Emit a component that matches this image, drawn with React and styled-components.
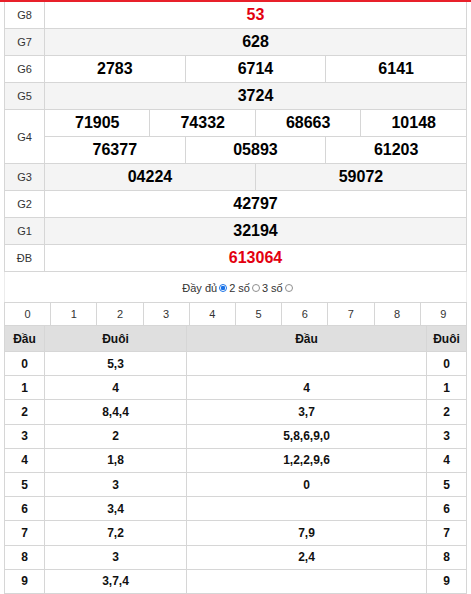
import React from 'react';
import styled, { createGlobalStyle } from 'styled-components';

const GlobalStyle = createGlobalStyle`
    html, body { margin: 0; padding: 0; background: #fff; }
    body { font-family: "Liberation Sans", Arial, sans-serif; color: #000; }
`;

const Page = styled.div`
    width: 471px;
    box-sizing: border-box;
    border-top: 2px solid #e8202a;
    padding: 0 4px;
`;

const Table = styled.table`
    width: 100%;
    border-collapse: collapse;
    table-layout: fixed;
`;

const ResultTable = styled(Table)`
    tr:first-child td { border-top: 0; }
`;

const Row = styled.tr`
    background: ${p => (p.$alt ? '#f4f4f4' : '#fff')};
`;

const LabelCol = styled.col`
    width: 40px;
`;

const Label = styled.td`
    height: 26px;
    padding: 0;
    border: 1px solid #d6d6d6;
    text-align: center;
    font-size: 11px;
    color: #333;
`;

const Prize = styled.td`
    height: 26px;
    padding: 0;
    border: 1px solid #d6d6d6;
    text-align: center;
    font-size: 16px;
    font-weight: bold;
    color: ${p => (p.$red ? '#e3000f' : '#000')};
`;

const RadioRow = styled.div`
    height: 30px;
    display: flex;
    align-items: center;
    justify-content: center;
    font-size: 11px;
    color: #333;
    border-left: 1px solid #ececec;
    border-right: 1px solid #ececec;
    padding: 1px 0 0 6px;
    box-sizing: border-box;
`;

const Radio = styled.span`
    width: 8px;
    height: 8px;
    border-radius: 50%;
    box-sizing: border-box;
    border: 1px solid ${p => (p.$on ? '#1a73e8' : '#8f8f8f')};
    background: ${p => (p.$on ? 'radial-gradient(circle, #1a73e8 0 2px, #fff 2.5px)' : '#fff')};
    margin: 0 2px;
`;

const DigitCell = styled.td`
    height: 22px;
    padding: 0;
    border: 1px solid #d6d6d6;
    text-align: center;
    font-size: 11px;
    color: #333;
`;

const HeadCell = styled.th`
    height: 25px;
    padding: 0;
    border: 1px solid #d6d6d6;
    border-top: 0;
    background: #dfdfdf;
    font-size: 12px;
    font-weight: bold;
    color: #111;
`;

const LotoCell = styled.td`
    height: 23.2px;
    padding: 0;
    border: 1px solid #d6d6d6;
    text-align: center;
    font-size: 12px;
    font-weight: bold;
    color: #111;
`;

const NarrowCol = styled.col`
    width: 40px;
`;
const TailCol = styled.col`
    width: 142px;
`;

const prizes = [
    { label: 'G8', nums: ['53'], red: true },
    { label: 'G7', nums: ['628'] },
    { label: 'G6', nums: ['2783', '6714', '6141'] },
    { label: 'G5', nums: ['3724'] },
];
const after = [
    { label: 'G3', nums: ['04224', '59072'] },
    { label: 'G2', nums: ['42797'] },
    { label: 'G1', nums: ['32194'] },
    { label: 'ĐB', nums: ['613064'], red: true },
];

const loto = [
    ['5,3', ''],
    ['4', '4'],
    ['8,4,4', '3,7'],
    ['2', '5,8,6,9,0'],
    ['1,8', '1,2,2,9,6'],
    ['3', '0'],
    ['3,4', ''],
    ['7,2', '7,9'],
    ['3', '2,4'],
    ['3,7,4', ''],
];

function PrizeRow({ p, alt }) {
    const span = 12 / p.nums.length;
    return (
        <Row $alt={alt}>
            <Label>{p.label}</Label>
            {p.nums.map((n, i) => (
                <Prize key={i} colSpan={span} $red={p.red}>{n}</Prize>
            ))}
        </Row>
    );
}

export default function App() {
    return (
        <Page>
            <GlobalStyle />
            <ResultTable>
                <colgroup>
                    <LabelCol />
                    {Array.from({ length: 12 }).map((_, i) => <col key={i} />)}
                </colgroup>
                <tbody>
                    {prizes.map((p, i) => <PrizeRow key={p.label} p={p} alt={i % 2 === 1} />)}
                    <Row>
                        <Label rowSpan={2}>G4</Label>
                        {['71905', '74332', '68663', '10148'].map(n => <Prize key={n} colSpan={3}>{n}</Prize>)}
                    </Row>
                    <Row>
                        {['76377', '05893', '61203'].map(n => <Prize key={n} colSpan={4}>{n}</Prize>)}
                    </Row>
                    {after.map((p, i) => <PrizeRow key={p.label} p={p} alt={i % 2 === 0} />)}
                </tbody>
            </ResultTable>

            <RadioRow>
                Đầy đủ<Radio $on />2 số<Radio />3 số<Radio />
            </RadioRow>

            <Table>
                <tbody>
                    <tr>
                        {Array.from({ length: 10 }).map((_, i) => <DigitCell key={i}>{i}</DigitCell>)}
                    </tr>
                </tbody>
            </Table>

            <Table>
                <colgroup>
                    <NarrowCol />
                    <TailCol />
                    <col />
                    <NarrowCol />
                </colgroup>
                <thead>
                    <tr>
                        <HeadCell>Đầu</HeadCell>
                        <HeadCell>Đuôi</HeadCell>
                        <HeadCell>Đầu</HeadCell>
                        <HeadCell>Đuôi</HeadCell>
                    </tr>
                </thead>
                <tbody>
                    {loto.map((r, i) => (
                        <tr key={i}>
                            <LotoCell>{i}</LotoCell>
                            <LotoCell>{r[0]}</LotoCell>
                            <LotoCell>{r[1]}</LotoCell>
                            <LotoCell>{i}</LotoCell>
                        </tr>
                    ))}
                </tbody>
            </Table>
        </Page>
    );
}
